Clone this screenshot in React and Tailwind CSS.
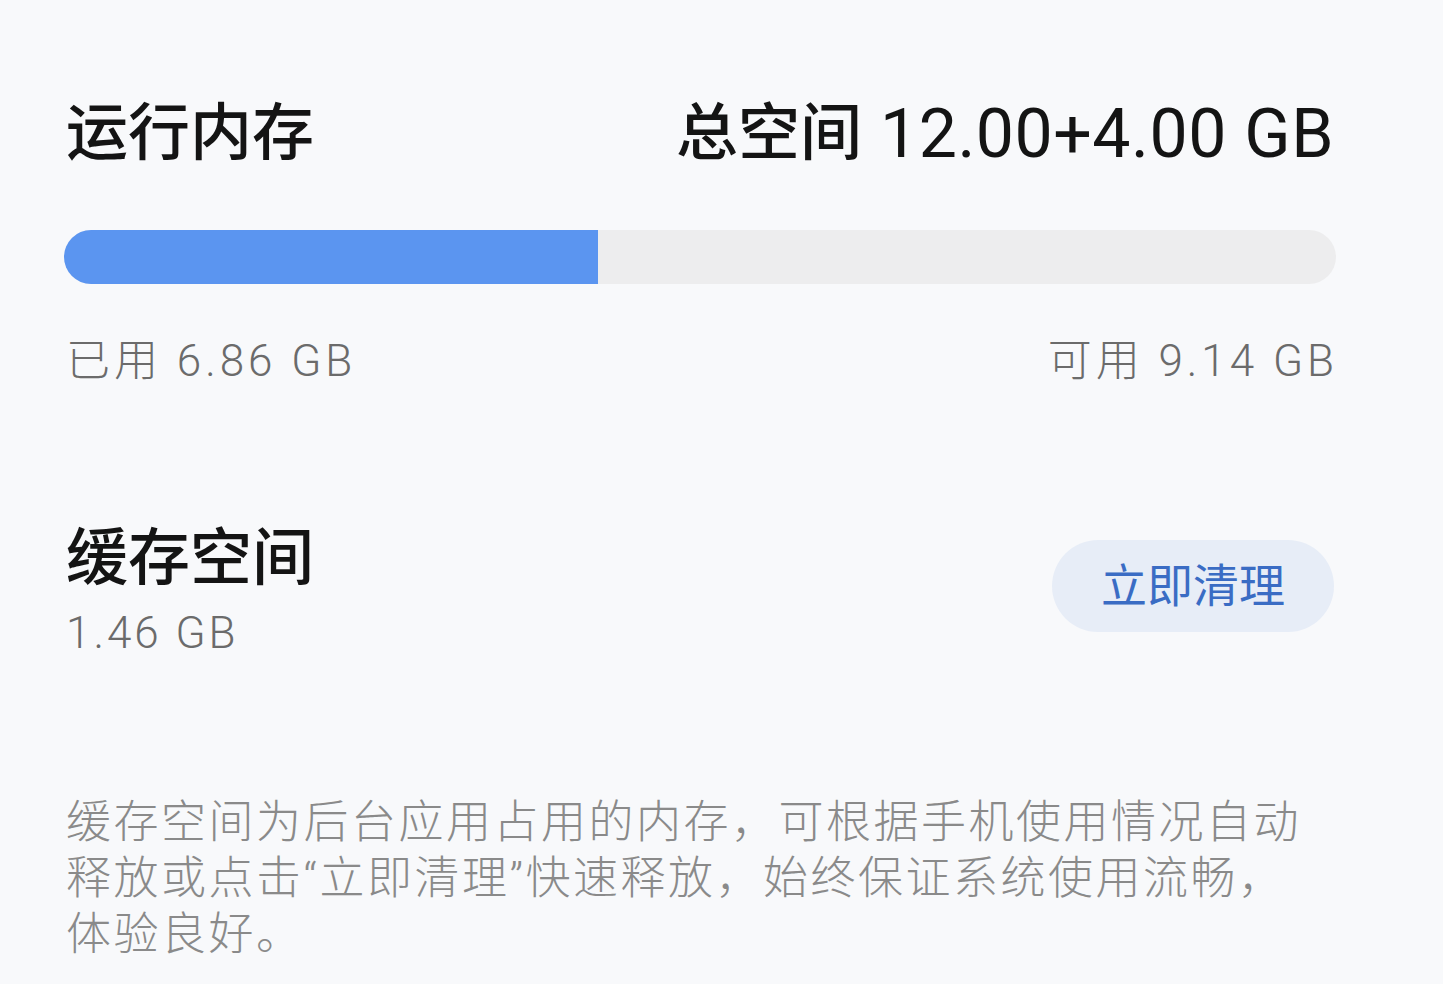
export default function App() {
  const used = 6.86;
  const total = 16.34;
  return (
    <div
      className="w-[1443px] h-[984px] bg-[#f8f9fb] px-[66px] pt-[103px] text-[#141414]"
      style={{ fontFamily: 'Roboto, "Noto Sans CJK SC", "Noto Sans", sans-serif' }}
    >
      <div className="w-[1268px]">
        <div className="flex items-center justify-between h-[62px] leading-none">
          <div className="text-[62px] font-medium">运行内存</div>
          <div className="flex items-center gap-[18px]">
            <span className="text-[62px] font-medium">总空间</span>
            <span className="text-[68px] font-normal tracking-[0.5px]">12.00+4.00 GB</span>
          </div>
        </div>

        <div className="mt-[65px] -mx-[2px] h-[54px] rounded-full bg-[#ededee] overflow-hidden flex">
          <div className="h-full bg-[#5b95f0]" style={{ width: `${(used / total) * 100}%` }} />
        </div>

        <div className="mt-[55px] flex justify-between text-[44px] leading-none font-light tracking-[4px] text-[#6b6b6b]">
          <span>已用 6.86 GB</span>
          <span className="-mr-[4px]">可用 9.14 GB</span>
        </div>

        <div className="mt-[145px] flex items-start justify-between">
          <div>
            <div className="text-[62px] font-medium leading-none">缓存空间</div>
            <div className="mt-[21px] text-[44px] leading-none font-light tracking-[3px] text-[#6b6b6b]">1.46 GB</div>
          </div>
          <button className="mt-[12px] w-[282px] h-[92px] rounded-full bg-[#e7edf7] text-[46px] text-[#3a6cc4] leading-none">
            立即清理
          </button>
        </div>

        <p className="mt-[140px] text-[45px] leading-[56px] font-light text-[#8a8a8a] tracking-[2.5px]">
          缓存空间为后台应用占用的内存，可根据手机使用情况自动
          <br />
          释放或点击“立即清理”快速释放，始终保证系统使用流畅，
          <br />
          体验良好。
        </p>
      </div>
    </div>
  );
}
